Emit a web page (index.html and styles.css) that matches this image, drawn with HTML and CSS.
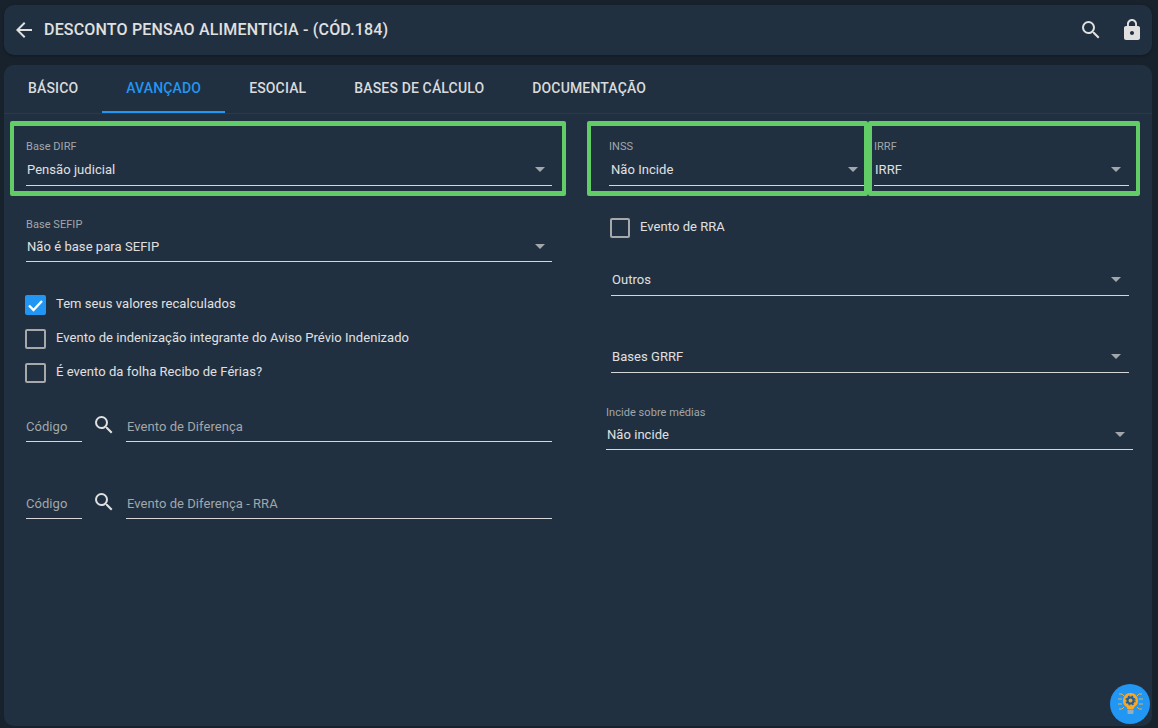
FILE: index.html
```html
<!DOCTYPE html>
<html lang="pt-BR">
  <head>
    <meta charset="UTF-8" />
    <title>Desconto Pensao Alimenticia</title>
    <link rel="stylesheet" href="styles.css">
  </head>
  <body>
    <header class="card topbar">
      <svg class="icon back" viewBox="0 0 24 24"><path d="M20 11H7.83l5.59-5.59L12 4l-8 8 8 8 1.41-1.41L7.83 13H20z"/></svg>
      <h1>DESCONTO PENSAO ALIMENTICIA - (CÓD.184)</h1>
      <svg class="icon search" viewBox="0 0 24 24"><path d="M15.5 14h-.79l-.28-.27A6.47 6.47 0 0 0 16 9.5 6.5 6.5 0 1 0 9.5 16c1.61 0 3.09-.59 4.23-1.57l.27.28v.79l5 4.99L20.49 19l-4.99-5zm-6 0C7.01 14 5 11.99 5 9.5S7.01 5 9.5 5 14 7.01 14 9.5 11.99 14 9.5 14z"/></svg>
      <svg class="icon lock" viewBox="0 0 24 24"><path d="M18 8h-1V6c0-2.76-2.24-5-5-5S7 3.24 7 6v2H6c-1.1 0-2 .9-2 2v10c0 1.1.9 2 2 2h12c1.1 0 2-.9 2-2V10c0-1.1-.9-2-2-2zm-6 9c-1.1 0-2-.9-2-2s.9-2 2-2 2 .9 2 2-.9 2-2 2zm3.1-9H8.9V6c0-1.71 1.39-3.1 3.1-3.1s3.1 1.39 3.1 3.1v2z"/></svg>
    </header>

    <main class="card content">
      <nav class="tabs">
        <a class="tab">BÁSICO</a>
        <a class="tab active">AVANÇADO</a>
        <a class="tab">ESOCIAL</a>
        <a class="tab">BASES DE CÁLCULO</a>
        <a class="tab">DOCUMENTAÇÃO</a>
      </nav>

      <div class="form">
        <section class="col col-left">
          <div class="mark mark-dirf">
            <div class="field">
              <span class="field-label">Base DIRF</span>
              <div class="field-value tall"><span>Pensão judicial</span><i class="caret"></i></div>
            </div>
          </div>

          <div class="field sefip">
            <span class="field-label">Base SEFIP</span>
            <div class="field-value"><span>Não é base para SEFIP</span><i class="caret"></i></div>
          </div>

          <div class="checks">
            <label class="check"><span class="box checked"><svg viewBox="0 0 21 20"><path d="M4 10.500 8.500 15 17 6" fill="none" stroke="#fff" stroke-width="2.400"/></svg></span>Tem seus valores recalculados</label>
            <label class="check"><span class="box"></span>Evento de indenização integrante do Aviso Prévio Indenizado</label>
            <label class="check"><span class="box"></span>É evento da folha Recibo de Férias?</label>
          </div>

          <div class="lookup first">
            <div class="lookup-code">Código</div>
            <svg class="icon lookup-icon" viewBox="0 0 24 24"><path d="M15.5 14h-.79l-.28-.27A6.47 6.47 0 0 0 16 9.5 6.5 6.5 0 1 0 9.5 16c1.61 0 3.09-.59 4.23-1.57l.27.28v.79l5 4.99L20.49 19l-4.99-5zm-6 0C7.01 14 5 11.99 5 9.5S7.01 5 9.5 5 14 7.01 14 9.5 11.99 14 9.5 14z"/></svg>
            <div class="lookup-name">Evento de Diferença</div>
          </div>
          <div class="lookup">
            <div class="lookup-code">Código</div>
            <svg class="icon lookup-icon" viewBox="0 0 24 24"><path d="M15.5 14h-.79l-.28-.27A6.47 6.47 0 0 0 16 9.5 6.5 6.5 0 1 0 9.5 16c1.61 0 3.09-.59 4.23-1.57l.27.28v.79l5 4.99L20.49 19l-4.99-5zm-6 0C7.01 14 5 11.99 5 9.5S7.01 5 9.5 5 14 7.01 14 9.5 11.99 14 9.5 14z"/></svg>
            <div class="lookup-name">Evento de Diferença - RRA</div>
          </div>
        </section>

        <section class="col col-right">
          <div class="mark-row">
            <div class="mark mark-inss">
              <div class="field">
                <span class="field-label">INSS</span>
                <div class="field-value tall"><span>Não Incide</span><i class="caret"></i></div>
              </div>
            </div>
            <div class="mark mark-irrf">
              <div class="field">
                <span class="field-label">IRRF</span>
                <div class="field-value tall"><span>IRRF</span><i class="caret"></i></div>
              </div>
            </div>
          </div>

          <label class="check rra"><span class="box"></span>Evento de RRA</label>

          <div class="field plain outros">
            <div class="field-value"><span>Outros</span><i class="caret"></i></div>
          </div>
          <div class="field plain grrf">
            <div class="field-value"><span>Bases GRRF</span><i class="caret"></i></div>
          </div>
          <div class="field medias">
            <span class="field-label">Incide sobre médias</span>
            <div class="field-value"><span>Não incide</span><i class="caret"></i></div>
          </div>
        </section>
      </div>

      <button class="tip">
        <svg viewBox="0 0 40 40">
          <path d="M9 10h3l2 2M8 15h4M8 20h4M9 25h3l2-2M32 10h-3l-2 2M33 15h-4M33 20h-4M32 25h-3l-2-2" fill="none" stroke="#d9b45c" stroke-width="1"/>
          <path d="M20.500 9a7.500 7.500 0 0 0-4.500 13.500c.8.700 1.300 1.500 1.300 2.500h6.400c0-1 .5-1.800 1.300-2.500A7.500 7.500 0 0 0 20.500 9z" fill="#f9a825"/>
          <circle cx="20.500" cy="16.500" r="3" fill="none" stroke="#1c5f9e" stroke-width="2"/>
          <circle cx="20.500" cy="16.500" r="4.500" fill="none" stroke="#1c5f9e" stroke-width="1.200" stroke-dasharray="1.800 1.800"/>
          <rect x="17.500" y="25.500" width="6" height="4.500" rx="1" fill="#8fb0c4"/>
        </svg>
      </button>
    </main>
  </body>
</html>
```

FILE: styles.css
```css
:root {
  --page-color: #18222d;
  --card-color: #203040;
  --text-color: #e0e0e0;
  --muted-color: #a2a7ab;
  --line-color: #d4d6d8;
  --blue-color: #2196f3;
  --green-color: #62cc66;
}

* {
  box-sizing: border-box;
}

html,
body {
  height: 100%;
}

body {
  margin: 0;
  padding: 5px 6px 2px 4px;
  display: flex;
  flex-direction: column;
  gap: 10px;
  overflow: hidden;
  background-color: var(--page-color);
  color: var(--text-color);
  font-family: Roboto, Arial, sans-serif;
  font-size: 13px;
  letter-spacing: 0.05px;
}

.card {
  background-color: var(--card-color);
  border-radius: 10px;
}

.icon {
  fill: var(--text-color);
  flex: none;
}

.topbar {
  height: 50px;
  flex: none;
  display: flex;
  align-items: center;
  padding: 0 8px 0 8px;
  box-shadow: 0 1px 3px rgba(0, 0, 0, 0.3);
}

.topbar h1 {
  margin: 0 auto 2px 8px;
  font-size: 16px;
  font-weight: 500;
  letter-spacing: 0.18px;
}

.back {
  width: 24px;
  height: 24px;
}

.search {
  width: 24px;
  height: 24px;
  margin-right: 17px;
}

.lock {
  width: 24px;
  height: 24px;
}

.content {
  flex: 1;
  position: relative;
}

.tabs {
  height: 49px;
  display: flex;
  border-bottom: 1px solid #2a3a49;
}

.tab {
  padding: 0 24px;
  line-height: 47px;
  font-size: 14px;
  font-weight: 500;
  letter-spacing: 0.15px;
  color: #d9dbdd;
}

.tab.active {
  color: var(--blue-color);
  border-bottom: 2px solid var(--blue-color);
  height: 48px;
}

.form {
  display: flex;
  gap: 21px;
  padding: 7px 12px 0 6px;
}

.col-left {
  width: 556px;
  flex: none;
}

.col-right {
  flex: 1;
}

.mark {
  border: 4px solid var(--green-color);
  border-width: 5px 4px;
  border-radius: 2px;
  height: 75px;
  padding-top: 14px;
}

.mark-dirf {
  padding-left: 12px;
  padding-right: 10px;
}

.mark-row {
  display: flex;
}

.mark-inss {
  width: 281px;
  padding-left: 18px;
}

.mark-inss .field-value {
  padding-left: 2px;
  padding-right: 6px;
}

.mark-irrf {
  flex: 1;
  padding-left: 2px;
  padding-right: 7px;
}

.field-label {
  display: block;
  height: 14px;
  line-height: 14px;
  font-size: 11px;
  color: var(--muted-color);
}

.field-value {
  height: 31px;
  display: flex;
  align-items: center;
  justify-content: space-between;
  padding: 0 8px 0 1px;
  border-bottom: 1px solid var(--line-color);
}

.col-left .field-value {
  padding-right: 7px;
}

.field-value.tall {
  height: 32px;
  padding-bottom: 1px;
}

.caret {
  width: 0;
  height: 0;
  border-left: 5px solid transparent;
  border-right: 5px solid transparent;
  border-top: 5px solid var(--muted-color);
}

.sefip {
  margin: 22px 14px 0 16px;
}

.sefip .field-value {
  height: 30px;
}

.checks {
  margin: 33px 0 0 15px;
  display: flex;
  flex-direction: column;
  gap: 14px;
}

.check {
  display: flex;
  align-items: flex-start;
  gap: 10px;
  height: 20px;
  line-height: 18px;
}

.box {
  width: 21px;
  height: 20px;
  flex: none;
  border: 2px solid #a6a8aa;
  border-radius: 2px;
}

.box.checked {
  border: none;
  background-color: var(--blue-color);
}

.box svg {
  display: block;
  width: 21px;
  height: 20px;
}

.lookup {
  display: flex;
  align-items: flex-end;
  margin: 46px 14px 0 16px;
}

.lookup.first {
  margin-top: 28px;
}

.lookup-code,
.lookup-name {
  height: 31px;
  line-height: 32px;
  color: var(--muted-color);
  border-bottom: 1px solid var(--line-color);
}

.lookup-code {
  width: 56px;
}

.lookup-name {
  flex: 1;
  padding-left: 1px;
}

.lookup-icon {
  width: 24px;
  height: 24px;
  margin: 0 10px 5px 10px;
}

.check.rra {
  margin: 22px 0 0 23px;
  line-height: 18px;
}

.rra .box {
  width: 20px;
}

.outros {
  margin: 22px 11px 0 24px;
}

.outros .field-value,
.grrf .field-value {
  height: 36px;
  padding-top: 4px;
}

.grrf {
  margin: 41px 11px 0 24px;
}

.medias {
  margin: 33px 7px 0 19px;
}

.medias .field-value {
  height: 30px;
}

.tip {
  position: absolute;
  right: 2px;
  bottom: 2px;
  width: 40px;
  height: 40px;
  padding: 0;
  border: none;
  border-radius: 50%;
  background-color: var(--blue-color);
}

.tip svg {
  display: block;
  width: 40px;
  height: 40px;
}
```
